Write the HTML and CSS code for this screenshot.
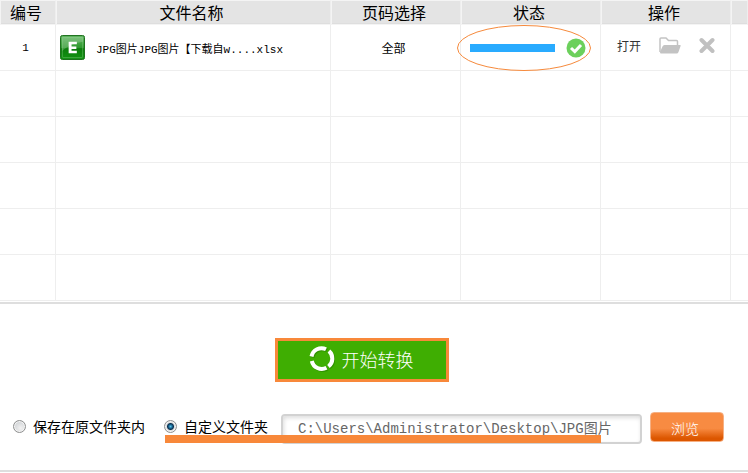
FILE: index.html
```
<!DOCTYPE html>
<html lang="zh-CN">
<head>
    <meta charset="UTF-8">
    <meta name="viewport" content="width=device-width, initial-scale=1.0">
    <title>文件转换</title>
    <link rel="stylesheet" href="styles.css">
</head>
<body>

    <table class="files">
        <colgroup>
            <col class="col-id">
            <col class="col-name">
            <col class="col-page">
            <col class="col-status">
            <col class="col-action">
            <col>
        </colgroup>
        <thead>
            <tr>
                <th>编号</th>
                <th>文件名称</th>
                <th>页码选择</th>
                <th>状态</th>
                <th>操作</th>
                <th></th>
            </tr>
        </thead>
        <tbody>
            <tr>
                <td class="center mono">1</td>
                <td>
                    <div class="file">
                        <svg width="25" height="25" viewBox="0 0 26 26" aria-hidden="true">
                            <defs>
                                <linearGradient id="excel" x1="0" y1="0" x2="0" y2="1">
                                    <stop offset="0" stop-color="#5fb55f"/>
                                    <stop offset="0.5" stop-color="#2f982f"/>
                                    <stop offset="0.55" stop-color="#0c7d0c"/>
                                    <stop offset="1" stop-color="#139413"/>
                                </linearGradient>
                            </defs>
                            <rect x="0.5" y="0.5" width="25" height="25" rx="2" fill="url(#excel)" stroke="#176b17"/>
                            <path d="M2 2H24V7C17 8 8 11 2 17Z" fill="#fff" opacity="0.2"/>
                            <rect x="2.5" y="2.5" width="21" height="21" rx="1" fill="none" stroke="#8fd08f" opacity="0.4"/>
                            <path d="M9 7H17.5V9.5H12V12H17V14.5H12V16.5H17.5V19H9Z" fill="#fff"/>
                        </svg>
                        <span class="mono">JPG图片JPG图片【下载自w....xlsx</span>
                    </div>
                </td>
                <td class="center">全部</td>
                <td class="status-cell">
                    <div class="status">
                        <div class="bar"></div>
                        <svg width="20" height="20" viewBox="0 0 20 20" aria-hidden="true">
                            <circle cx="10" cy="10" r="9.5" fill="#6cd05c"/>
                            <path d="M5 10L8.8 13.6L15 7" fill="none" stroke="#fff" stroke-width="3"/>
                        </svg>
                    </div>
                    <svg class="ring" viewBox="0 0 134 46" aria-hidden="true">
                        <ellipse cx="67" cy="23" rx="66.5" ry="22.5" fill="none" stroke="#f68a3c"/>
                    </svg>
                </td>
                <td>
                    <div class="actions">
                        <a href="#" class="open">打开</a>
                        <button type="button" class="icon" aria-label="打开文件夹">
                            <svg width="22" height="17" viewBox="0 0 22 17">
                                <path d="M1 15V2Q1 1 2 1H7L9.5 3.5H17.5Q18.5 3.5 18.5 4.5V8" fill="none" stroke="#c3c3c3" stroke-width="1.5"/>
                                <path d="M5.5 8H21Q22 8 21.6 9L19.5 15Q19 16.5 17.5 16.5H2Q1 16.5 1 15L3.5 9.5Q4 8 5.5 8Z" fill="#c3c3c3"/>
                            </svg>
                        </button>
                        <button type="button" class="icon" aria-label="删除">
                            <svg width="16" height="17" viewBox="0 0 16 17">
                                <path d="M2.5 3L13.5 14M13.5 3L2.5 14" stroke="#c0c0c0" stroke-width="4" stroke-linecap="round"/>
                            </svg>
                        </button>
                    </div>
                </td>
                <td></td>
            </tr>
            <tr><td></td><td></td><td></td><td></td><td></td><td></td></tr>
            <tr><td></td><td></td><td></td><td></td><td></td><td></td></tr>
            <tr><td></td><td></td><td></td><td></td><td></td><td></td></tr>
            <tr><td></td><td></td><td></td><td></td><td></td><td></td></tr>
            <tr><td></td><td></td><td></td><td></td><td></td><td></td></tr>
        </tbody>
    </table>

    <form class="panel">
        <button type="button" class="start">
            <svg width="26" height="26" viewBox="0 0 26 26" aria-hidden="true">
                <g fill="none" stroke="#237a00" stroke-width="4" opacity="0.5" transform="translate(1 1)">
                    <path d="M2.5 10.5A10.2 10.2 0 0 1 17 3.3"/>
                    <path d="M20 5A10.2 10.2 0 0 1 19.5 20.5"/>
                    <path d="M17.5 21.8A10.2 10.2 0 0 1 2.8 15"/>
                </g>
                <g fill="none" stroke="#fff" stroke-width="4">
                    <path d="M2.5 10.5A10.2 10.2 0 0 1 17 3.3"/>
                    <path d="M20 5A10.2 10.2 0 0 1 19.5 20.5"/>
                    <path d="M17.5 21.8A10.2 10.2 0 0 1 2.8 15"/>
                </g>
            </svg>
            开始转换
        </button>

        <div class="save">
            <label class="choice"><input type="radio" name="folder">保存在原文件夹内</label>
            <div class="custom">
                <label class="choice"><input type="radio" name="folder" checked>自定义文件夹</label>
                <input type="text" class="path" aria-label="文件夹路径" value="C:\Users\Administrator\Desktop\JPG图片">
                <div class="mark"></div>
            </div>
            <button type="button" class="browse">浏览</button>
        </div>
    </form>

</body>
</html>
```
FILE: styles.css
```
* {
    box-sizing: border-box;
}
body {
    margin: 0;
    background-color: white;
    color: black;
    font-family: "Noto Sans CJK SC", sans-serif;
    font-size: 12px;
}
button, input {
    font-family: inherit;
    margin: 0;
}
.files {
    width: 100%;
    table-layout: fixed;
    border-collapse: separate;
    border-spacing: 0;
}
.col-id {
    width: 56px;
}
.col-name {
    width: 275px;
}
.col-page, .col-action {
    width: 130px;
}
.col-status {
    width: 140px;
}
th {
    height: 25px;
    padding: 0 4px 2px 0;
    background-color: #e4e4e4;
    border: 1px solid #f4f4f4;
    border-right-color: #eeeeee;
    box-shadow: inset 0 -1px #dedede;
    font-size: 16px;
    line-height: 20px;
    font-weight: normal;
}
td {
    height: 46px;
    padding: 0;
    border-right: 1px solid #eeeeee;
    border-bottom: 1px solid #eeeeee;
}
td:last-child {
    border-right: none;
}
.center {
    text-align: center;
    padding-right: 4px;
}
.mono {
    font-family: "Liberation Mono", "Noto Sans CJK SC", monospace;
    font-size: 11px;
}
.file {
    display: flex;
    align-items: center;
    gap: 11px;
    padding-left: 4px;
    white-space: nowrap;
}
.status-cell {
    position: relative;
}
.status {
    display: flex;
    align-items: center;
    gap: 11px;
    padding-left: 9px;
}
.bar {
    width: 85px;
    height: 8px;
    background-color: #29abff;
}
.ring {
    position: absolute;
    top: 0;
    left: -4px;
    width: 134px;
    height: 46px;
}
.actions {
    display: flex;
    align-items: center;
    gap: 18px;
    padding: 0 0 4px 16px;
}
.open {
    color: #333333;
    text-decoration: none;
}
.icon {
    display: flex;
    padding: 0;
    border: none;
    background: none;
}
.panel {
    display: flex;
    flex-direction: column;
    align-items: center;
    gap: 30px;
    margin-top: 1px;
    padding: 34px 0 24px;
    border-top: 2px solid #dedede;
    border-bottom: 2px solid #dedede;
}
.start {
    display: flex;
    align-items: center;
    justify-content: center;
    gap: 7px;
    width: 174px;
    height: 44px;
    margin-right: 24px;
    padding: 0 2px 2px 0;
    border: 3px solid #f8883a;
    background-color: #3fae02;
    color: white;
    font-size: 18px;
    font-weight: 300;
}
.save {
    display: flex;
    align-items: center;
    gap: 8px;
    width: 100%;
    padding: 0 24px 0 13px;
}
.choice {
    display: flex;
    align-items: center;
    gap: 7px;
    padding-bottom: 6px;
    font-size: 14px;
    line-height: 20px;
    white-space: nowrap;
}
.choice input {
    appearance: none;
    width: 13px;
    height: 13px;
    border: 1px solid #8e8f8f;
    border-radius: 50%;
    background: radial-gradient(circle at 60% 65%, #f2f2f2, #c4c8cc);
    box-shadow: inset 0 0 0 1px #f4f4f4;
}
.choice input:checked {
    background: radial-gradient(circle, #57c6ee 0, #175c85 2px, #0d3150 3px, #dddddd 4px);
}
.custom {
    position: relative;
    display: flex;
    align-items: center;
    flex: 1;
    gap: 13px;
    margin-left: 11px;
}
.path {
    flex: 1;
    min-width: 0;
    height: 30px;
    padding: 0 15px 4px;
    border: 2px solid #d2d2d2;
    border-radius: 4px;
    box-shadow: inset 1px 2px 4px #dddddd;
    color: #666666;
    font-family: "Liberation Mono", "Noto Sans CJK SC", monospace;
    font-size: 14px;
}
/* highlight under the chosen folder */
.mark {
    position: absolute;
    left: 1px;
    right: 41px;
    bottom: 1px;
    height: 8px;
    background-color: #f8883a;
}
.browse {
    width: 74px;
    height: 30px;
    margin-bottom: 4px;
    padding: 2px 4px 0 0;
    border: 1px solid #f6b083;
    border-radius: 4px;
    background: linear-gradient(#f88b42 55%, #dc5600 90%);
    color: white;
    font-size: 14px;
    font-weight: 300;
}
```
